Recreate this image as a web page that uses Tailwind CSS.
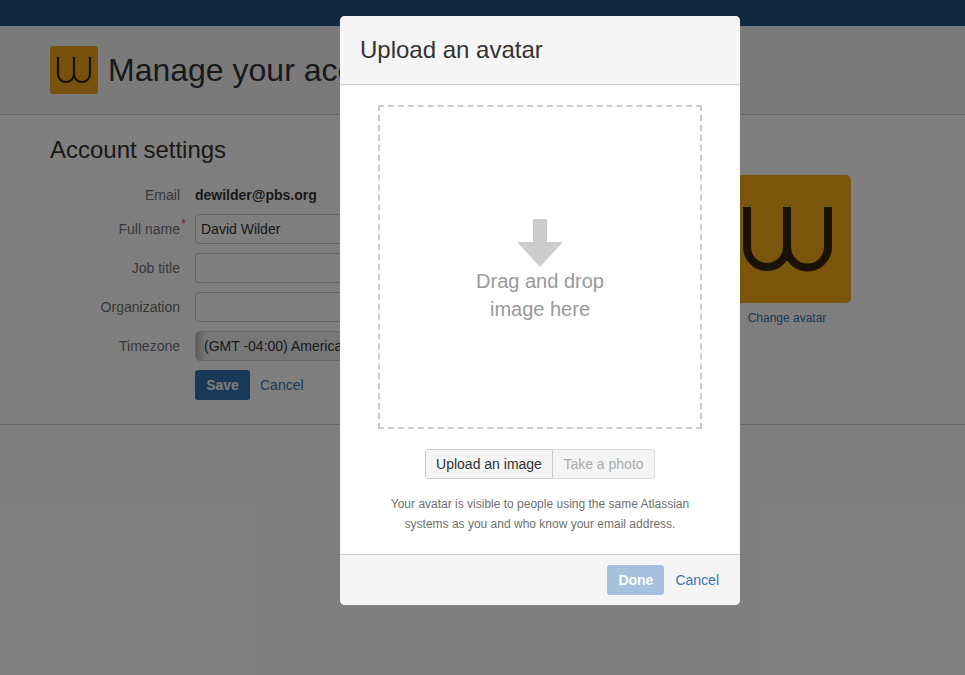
<!DOCTYPE html>
<html lang="en">
<head>
  <meta charset="UTF-8">
  <meta name="viewport" content="width=device-width, initial-scale=1">
  <title>Manage your account</title>
  <script src="https://cdn.jsdelivr.net/npm/@tailwindcss/browser@4"></script>
</head>
<body class="relative h-[675px] overflow-hidden bg-white text-[#333] font-['Liberation_Sans',Arial,sans-serif] text-sm">

  <!-- Top bar -->
  <div class="h-[26px] bg-[#205081]"></div>

  <!-- Page header -->
  <header class="h-[89px] px-[50px] pt-5 flex items-start gap-2.5 bg-[#f5f5f5] border-b border-[#ccc]">
    <svg class="w-12 h-12 rounded-[3px] bg-[#f0a318] shrink-0" viewBox="0 0 48 48" fill="none" stroke="#2e2208" stroke-width="2.2">
      <path d="M8 11V28A8 8 0 0 0 24 28V11M24 28A8 8 0 0 0 40 28V11"/>
    </svg>
    <h1 class="text-[32px] leading-[48px]">Manage your account</h1>
  </header>

  <!-- Settings form -->
  <main class="h-[310px] px-[50px] border-b border-[#ccc] flex">
    <div class="w-[673px] shrink-0">
      <h2 class="text-2xl leading-7 mt-[21px] text-[#333]">Account settings</h2>
      <form class="mt-[21px]">
        <div class="flex items-center h-5 mb-[9px]">
          <label class="w-[130px] text-right text-[#707070]">Email</label>
          <span class="ml-[15px] font-bold">dewilder@pbs.org</span>
        </div>
        <div class="flex items-center h-[30px] mb-[9px]">
          <label class="w-[130px] text-right text-[#707070] relative">Full name<span class="absolute -right-[6px] -top-[3px] text-xs text-[#d04437]">*</span></label>
          <input type="text" value="David Wilder" class="ml-[15px] w-[250px] h-[30px] px-[5px] border border-[#ccc] rounded-[3px] bg-white">
        </div>
        <div class="flex items-center h-[30px] mb-[9px]">
          <label class="w-[130px] text-right text-[#707070]">Job title</label>
          <input type="text" class="ml-[15px] w-[250px] h-[30px] px-[5px] border border-[#ccc] rounded-[3px] bg-white">
        </div>
        <div class="flex items-center h-[30px] mb-[9px]">
          <label class="w-[130px] text-right text-[#707070]">Organization</label>
          <input type="text" class="ml-[15px] w-[250px] h-[30px] px-[5px] border border-[#ccc] rounded-[3px] bg-white">
        </div>
        <div class="flex items-center h-[30px] mb-[9px]">
          <label class="w-[130px] text-right text-[#707070]">Timezone</label>
          <select class="ml-[15px] w-[250px] h-[30px] pl-2 border border-[#ccc] rounded-[5px] appearance-none bg-gradient-to-r from-[#bbb] from-0% to-[#eee] to-[4%]">
            <option>(GMT -04:00) America/New_York</option>
          </select>
        </div>
        <div class="flex items-center ml-[145px] gap-2.5">
          <button type="button" class="w-[55px] h-[30px] rounded-[3px] bg-[#3572b0] text-white font-bold">Save</button>
          <a href="#" class="text-[#3b73af]">Cancel</a>
        </div>
      </form>
    </div>
    <div class="w-32 pt-[60px] text-center">
      <svg class="w-32 h-32 rounded-[5px] bg-[#f5ab18]" viewBox="0 0 128 128" fill="none" stroke="#33250a" stroke-width="8">
        <path d="M24 32V72A20 20 0 0 0 64 72V32M64 72A20 20 0 0 0 105 72V32"/>
      </svg>
      <a href="#" class="block mt-[7px] text-xs text-[#3b73af]">Change avatar</a>
    </div>
  </main>

  <!-- Overlay and dialog -->
  <div class="absolute inset-0 bg-black/50 pl-[340px] pt-4">
    <div class="w-[400px] h-[589px] bg-white rounded-[5px] overflow-hidden flex flex-col">
      <div class="h-[69px] px-5 flex items-center bg-[#f5f5f5] border-b border-[#ccc]">
        <h3 class="text-2xl text-[#333]">Upload an avatar</h3>
      </div>
      <div class="flex-1 flex flex-col items-center pt-5">
        <div class="w-[324px] h-[324px] border-2 border-dashed border-[#ccc] flex flex-col items-center pt-[112px]">
          <svg class="w-[46px] h-[48px]" viewBox="0 0 46 48" fill="#ccc"><path d="M16 0H30V23H46L23 48L0 23H16Z"/></svg>
          <p class="text-xl leading-7 text-center text-[#999]">Drag and drop<br>image here</p>
        </div>
        <div class="flex mt-5 h-[30px]">
          <button type="button" class="w-[128px] border border-[#ccc] rounded-l-[3px] bg-[#f5f5f5] text-[#333]">Upload an image</button>
          <button type="button" class="w-[102px] border border-l-0 border-[#ddd] rounded-r-[3px] bg-[#f5f5f5] text-[#aaa]">Take a photo</button>
        </div>
        <p class="mt-[15px] text-xs leading-5 text-center text-[#707070]">Your avatar is visible to people using the same Atlassian<br>systems as you and who know your email address.</p>
      </div>
      <div class="h-[51px] pr-[21px] flex items-center justify-end gap-[11px] bg-[#f5f5f5] border-t border-[#ccc]">
        <button type="button" class="w-[57px] h-[30px] rounded-[3px] bg-[#a5c1dd] text-white font-bold">Done</button>
        <a href="#" class="text-[#3b73af]">Cancel</a>
      </div>
    </div>
  </div>

</body>
</html>
